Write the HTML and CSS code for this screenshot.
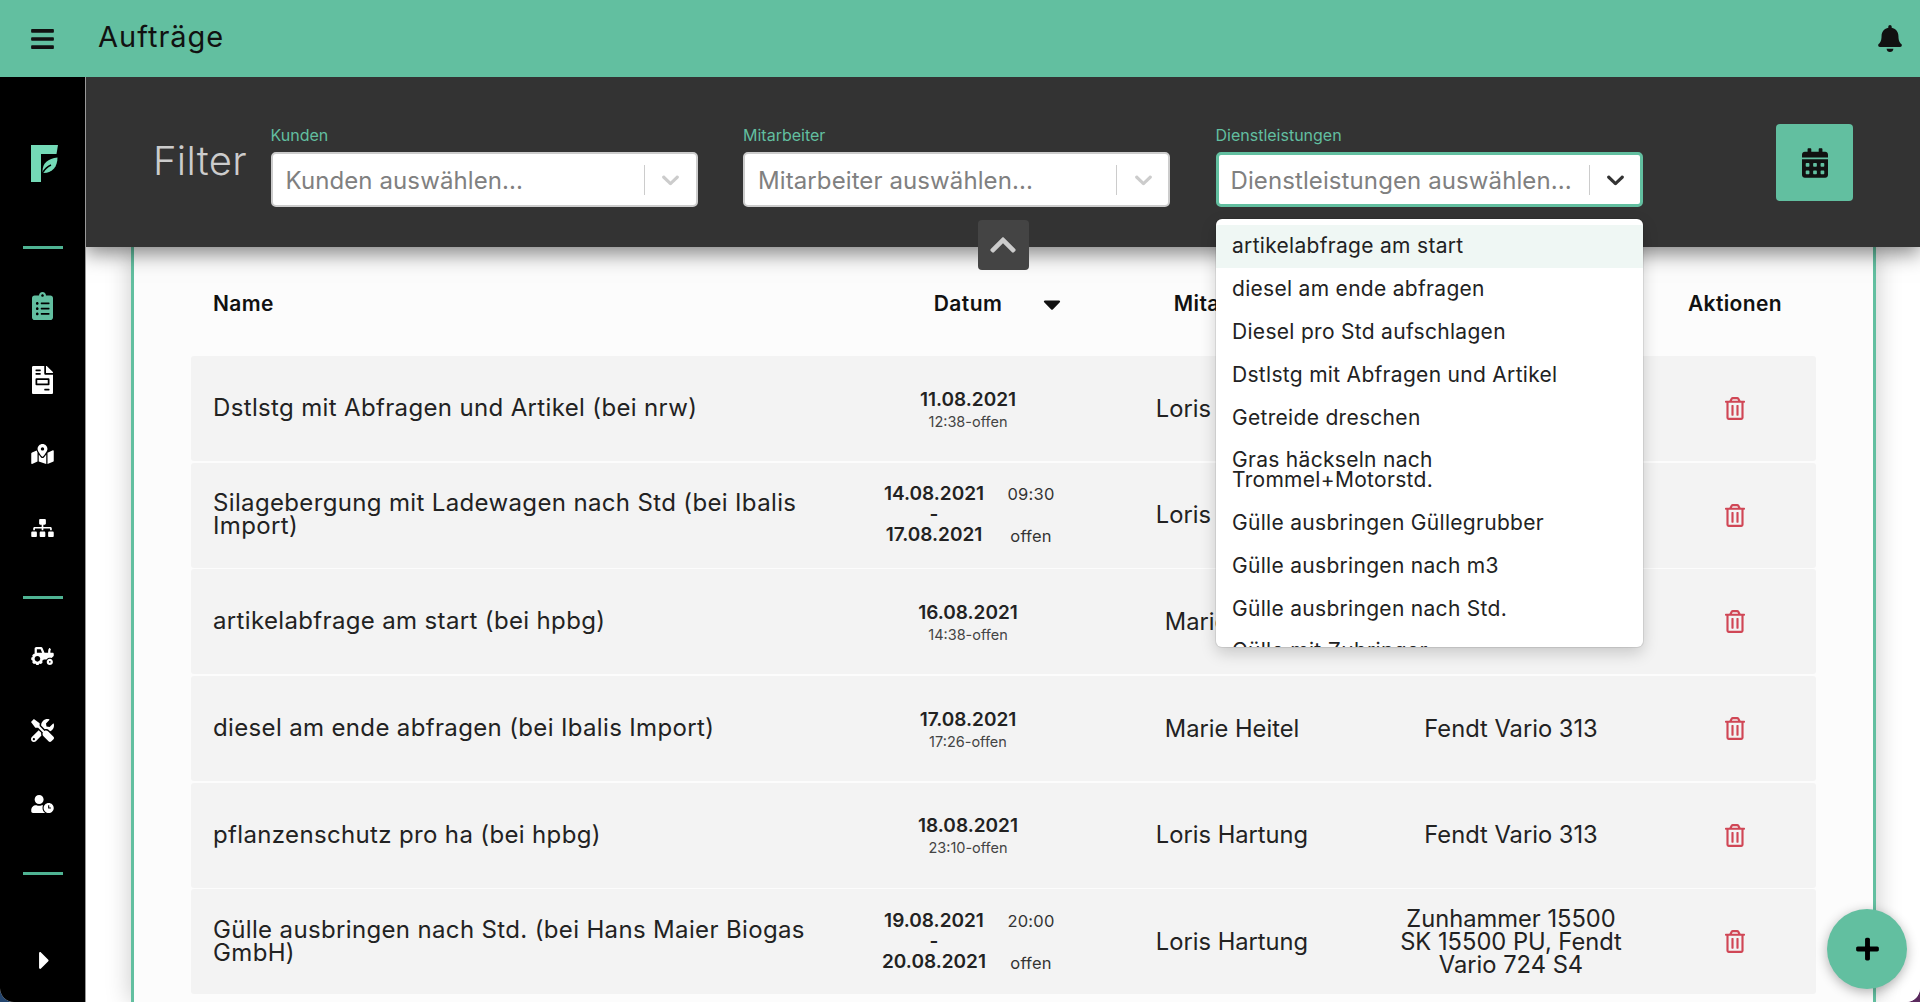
FILE: index.html
```html
<!DOCTYPE html>
<html lang="de">
<head>
<meta charset="utf-8">
<title>Aufträge</title>
<link rel="stylesheet" href="styles.css">
</head>
<body>
<svg class="defs" aria-hidden="true">
  <symbol id="i-bars" viewBox="0 0 448 512"><path d="M16 132h416c8.837 0 16-7.163 16-16V76c0-8.837-7.163-16-16-16H16C7.163 60 0 67.163 0 76v40c0 8.837 7.163 16 16 16zm0 160h416c8.837 0 16-7.163 16-16v-40c0-8.837-7.163-16-16-16H16c-8.837 0-16 7.163-16 16v40c0 8.837 7.163 16 16 16zm0 160h416c8.837 0 16-7.163 16-16v-40c0-8.837-7.163-16-16-16H16c-8.837 0-16 7.163-16 16v40c0 8.837 7.163 16 16 16z"/></symbol>
  <symbol id="i-bell" viewBox="0 0 448 512"><path d="M224 512c35.32 0 63.97-28.65 63.97-64H160.03c0 35.35 28.65 64 63.97 64zm215.39-149.71c-19.32-20.76-55.47-51.99-55.47-154.29 0-77.7-54.48-139.9-127.94-155.16V32c0-17.67-14.32-32-31.98-32s-31.98 14.33-31.98 32v20.84C118.56 68.1 64.08 130.3 64.08 208c0 102.3-36.15 133.53-55.47 154.29-6 6.45-8.66 14.16-8.61 21.71.11 16.4 12.98 32 32.1 32h383.8c19.12 0 32-15.6 32.1-32 .05-7.55-2.61-15.27-8.61-21.71z"/></symbol>
  <symbol id="i-calendar" viewBox="0 0 448 512"><path d="M0 464c0 26.5 21.5 48 48 48h352c26.5 0 48-21.5 48-48V192H0v272zm320-196c0-6.6 5.4-12 12-12h40c6.6 0 12 5.4 12 12v40c0 6.6-5.4 12-12 12h-40c-6.6 0-12-5.4-12-12v-40zm0 128c0-6.6 5.4-12 12-12h40c6.6 0 12 5.4 12 12v40c0 6.6-5.4 12-12 12h-40c-6.6 0-12-5.4-12-12v-40zM192 268c0-6.6 5.4-12 12-12h40c6.6 0 12 5.4 12 12v40c0 6.6-5.4 12-12 12h-40c-6.6 0-12-5.4-12-12v-40zm0 128c0-6.6 5.4-12 12-12h40c6.6 0 12 5.4 12 12v40c0 6.6-5.4 12-12 12h-40c-6.6 0-12-5.4-12-12v-40zM64 268c0-6.6 5.4-12 12-12h40c6.6 0 12 5.4 12 12v40c0 6.6-5.4 12-12 12H76c-6.6 0-12-5.4-12-12v-40zm0 128c0-6.6 5.4-12 12-12h40c6.6 0 12 5.4 12 12v40c0 6.6-5.4 12-12 12H76c-6.6 0-12-5.4-12-12v-40zM400 64h-48V16c0-8.8-7.2-16-16-16h-32c-8.8 0-16 7.2-16 16v48H160V16c0-8.8-7.2-16-16-16h-32c-8.8 0-16 7.2-16 16v48H48C21.5 64 0 85.5 0 112v48h448v-48c0-26.5-21.5-48-48-48z"/></symbol>
  <symbol id="i-clipboard" viewBox="0 0 384 512"><path d="M336 64h-80c0-35.3-28.7-64-64-64s-64 28.7-64 64H48C21.5 64 0 85.5 0 112v352c0 26.5 21.5 48 48 48h288c26.5 0 48-21.5 48-48V112c0-26.5-21.5-48-48-48zM96 424c-13.3 0-24-10.7-24-24s10.7-24 24-24 24 10.7 24 24-10.7 24-24 24zm0-96c-13.3 0-24-10.7-24-24s10.7-24 24-24 24 10.7 24 24-10.7 24-24 24zm0-96c-13.3 0-24-10.7-24-24s10.7-24 24-24 24 10.7 24 24-10.7 24-24 24zm96-192c13.3 0 24 10.7 24 24s-10.7 24-24 24-24-10.7-24-24 10.7-24 24-24zm128 368c0 4.4-3.6 8-8 8H168c-4.4 0-8-3.6-8-8v-16c0-4.4 3.6-8 8-8h144c4.4 0 8 3.6 8 8v16zm0-96c0 4.4-3.6 8-8 8H168c-4.4 0-8-3.6-8-8v-16c0-4.4 3.6-8 8-8h144c4.4 0 8 3.6 8 8v16zm0-96c0 4.4-3.6 8-8 8H168c-4.4 0-8-3.6-8-8v-16c0-4.4 3.6-8 8-8h144c4.4 0 8 3.6 8 8v16z"/></symbol>
  <symbol id="i-invoice" viewBox="0 0 384 512"><path d="M288 256H96v64h192v-64zm89-151L279.1 7c-4.5-4.5-10.6-7-17-7H256v128h128v-6.1c0-6.3-2.5-12.4-7-16.9zm-153 31V0H24C10.7 0 0 10.7 0 24v464c0 13.3 10.7 24 24 24h336c13.3 0 24-10.7 24-24V160H248c-13.2 0-24-10.8-24-24zM64 72c0-4.42 3.58-8 8-8h80c4.42 0 8 3.58 8 8v16c0 4.42-3.58 8-8 8H72c-4.42 0-8-3.58-8-8V72zm0 64c0-4.42 3.58-8 8-8h80c4.42 0 8 3.58 8 8v16c0 4.42-3.58 8-8 8H72c-4.42 0-8-3.58-8-8v-16zm256 304c0 4.42-3.58 8-8 8h-80c-4.42 0-8-3.58-8-8v-16c0-4.42 3.58-8 8-8h80c4.42 0 8 3.58 8 8v16zm0-200v96c0 8.84-7.16 16-16 16H80c-8.84 0-16-7.16-16-16v-96c0-8.84 7.16-16 16-16h224c8.84 0 16 7.16 16 16z"/></symbol>
  <symbol id="i-map" viewBox="0 0 576 512"><path d="M288 0c-69.59 0-126 56.41-126 126 0 56.26 82.35 158.8 113.9 196.02 6.39 7.54 17.82 7.54 24.2 0C331.65 284.8 414 182.26 414 126 414 56.41 357.59 0 288 0zm0 168c-23.2 0-42-18.8-42-42s18.8-42 42-42 42 18.8 42 42-18.8 42-42 42zM20.12 215.95A32.006 32.006 0 0 0 0 245.66v250.32c0 11.32 11.43 19.06 21.94 14.86L160 448V214.92c-8.84-15.98-16.07-31.54-21.25-46.42L20.12 215.95zM288 359.67c-14.07 0-27.38-6.18-36.51-16.96-19.66-23.2-40.57-49.62-59.49-76.72V448l192 64V266c-18.92 27.09-39.82 53.52-59.49 76.72-9.13 10.77-22.44 16.95-36.51 16.95zm266.06-198.51L416 224v288l139.88-55.95A31.996 31.996 0 0 0 576 426.34V176.02c0-11.32-11.43-19.06-21.94-14.86z"/></symbol>
  <symbol id="i-sitemap" viewBox="0 0 640 512"><path d="M128 352H32c-17.67 0-32 14.33-32 32v96c0 17.67 14.33 32 32 32h96c17.67 0 32-14.33 32-32v-96c0-17.67-14.33-32-32-32zm-24-80h192v48h48v-48h192v48h48v-57.59c0-21.17-17.23-38.41-38.41-38.41H344v-64h40c17.67 0 32-14.33 32-32V32c0-17.67-14.33-32-32-32H256c-17.67 0-32 14.33-32 32v96c0 17.67 14.33 32 32 32h40v64H94.41C73.23 224 56 241.23 56 262.41V320h48v-48zm264 80h-96c-17.67 0-32 14.33-32 32v96c0 17.67 14.33 32 32 32h96c17.67 0 32-14.33 32-32v-96c0-17.67-14.33-32-32-32zm240 0h-96c-17.67 0-32 14.33-32 32v96c0 17.67 14.33 32 32 32h96c17.67 0 32-14.33 32-32v-96c0-17.67-14.33-32-32-32z"/></symbol>
  <symbol id="i-tractor" viewBox="0 0 640 512"><path d="M528 336c-48.6 0-88 39.4-88 88s39.4 88 88 88 88-39.4 88-88-39.4-88-88-88zm0 112c-13.23 0-24-10.77-24-24s10.77-24 24-24 24 10.77 24 24-10.77 24-24 24zm80-288h-64v-40.2c0-14.12 4.7-27.76 13.15-38.84 4.42-5.8 3.55-14.06-1.32-19.49L534.2 37.3c-6.66-7.45-18.32-6.92-24.7.78C490.58 60.9 480 89.81 480 119.8V160H377.67L321.58 29.14A47.914 47.914 0 0 0 277.45 0H144c-26.47 0-48 21.53-48 48v146.52c-8.63-6.73-20.96-6.46-28.89 1.47L36 227.1c-8.59 8.59-8.59 22.52 0 31.11l5.06 5.06c-4.99 9.26-8.96 18.82-11.91 28.72H22c-12.15 0-22 9.85-22 22v44c0 12.15 9.85 22 22 22h7.14c2.96 9.91 6.92 19.46 11.91 28.73l-5.06 5.06c-8.59 8.59-8.59 22.52 0 31.11L67.1 476c8.59 8.59 22.52 8.59 31.11 0l5.06-5.06c9.26 4.99 18.82 8.96 28.72 11.91V490c0 12.15 9.85 22 22 22h44c12.15 0 22-9.85 22-22v-7.14c9.9-2.95 19.46-6.92 28.72-11.91l5.06 5.06c8.59 8.59 22.52 8.59 31.11 0l31.11-31.11c8.59-8.59 8.59-22.52 0-31.11l-5.06-5.06c4.99-9.26 8.96-18.82 11.91-28.72H330c12.15 0 22-9.85 22-22v-6h80.54c21.91-28.99 56.32-48 95.46-48 18.64 0 36.07 4.61 51.8 12.2l50.82-50.82c6-6 9.37-14.14 9.37-22.63V192c.01-17.67-14.32-32-31.99-32zM176 416c-44.18 0-80-35.82-80-80s35.82-80 80-80 80 35.82 80 80-35.82 80-80 80zm22-256h-38V64h106.89l41.15 96H198z"/></symbol>
  <symbol id="i-tools" viewBox="0 0 512 512"><path d="M501.1 395.7L384 278.6c-23.1-23.1-57.6-27.6-85.4-13.9L192 158.1V96L64 0 0 64l96 128h62.1l106.6 106.6c-13.6 27.8-9.2 62.3 13.9 85.4l117.1 117.1c14.6 14.6 38.2 14.6 52.7 0l52.7-52.7c14.5-14.6 14.5-38.2 0-52.7zM331.7 225c28.3 0 54.9 11 74.9 31l19.4 19.4c15.8-6.9 30.8-16.5 43.8-29.5 37.1-37.1 49.7-89.3 37.9-136.7-2.2-9-13.5-12.1-20.1-5.5l-74.4 74.4-67.9-11.3L334 98.9l74.4-74.4c6.6-6.6 3.4-17.9-5.7-20.2-47.4-11.7-99.6.9-136.6 37.9-28.5 28.5-41.9 66.1-41.2 103.6l82.1 82.1c8.1-1.9 16.5-2.9 24.7-2.9zm-103.9 82l-56.7-56.7L18.7 402.8c-25 25-25 65.5 0 90.5s65.5 25 90.5 0l123.6-123.6c-7.6-19.9-9.9-41.6-5-62.7zM64 472c-13.2 0-24-10.8-24-24 0-13.3 10.7-24 24-24s24 10.7 24 24c0 13.2-10.7 24-24 24z"/></symbol>
  <symbol id="i-userclock" viewBox="0 0 640 512"><path d="M496 224c-79.6 0-144 64.4-144 144s64.4 144 144 144 144-64.4 144-144-64.4-144-144-144zm64 150.3c0 5.3-4.4 9.7-9.7 9.7h-60.6c-5.3 0-9.7-4.4-9.7-9.7v-76.6c0-5.3 4.4-9.7 9.7-9.7h12.6c5.3 0 9.7 4.4 9.7 9.7V352h38.3c5.3 0 9.7 4.4 9.7 9.7v12.6zM320 368c0-27.8 6.7-54.1 18.2-77.5-8-1.5-16.2-2.5-24.6-2.5h-16.7c-22.2 10.2-46.9 16-72.9 16s-50.6-5.8-72.9-16h-16.7C60.2 288 0 348.2 0 422.4V464c0 26.5 21.5 48 48 48h347.1c-45.3-31.9-75.1-84.5-75.1-144zm-96-112c70.7 0 128-57.3 128-128S294.7 0 224 0 96 57.3 96 128s57.3 128 128 128z"/></symbol>
  <symbol id="i-caretright" viewBox="0 0 192 512"><path d="M0 384.662V127.338c0-17.818 21.543-26.741 34.142-14.142l128.662 128.662c7.81 7.81 7.81 20.474 0 28.284L34.142 398.804C21.543 411.404 0 402.48 0 384.662z"/></symbol>
  <symbol id="i-caretdown" viewBox="0 0 320 512"><path d="M31.3 192h257.3c17.8 0 26.7 21.5 14.1 34.1L174.1 354.8c-7.8 7.8-20.5 7.8-28.3 0L17.2 226.1C4.6 213.5 13.5 192 31.3 192z"/></symbol>
  <symbol id="i-chevup" viewBox="0 0 448 512"><path d="M240.971 130.524l194.343 194.343c9.373 9.373 9.373 24.569 0 33.941l-22.667 22.667c-9.357 9.357-24.522 9.375-33.901.04L224 227.495 69.255 381.516c-9.379 9.335-24.544 9.317-33.901-.04l-22.667-22.667c-9.373-9.373-9.373-24.569 0-33.941L207.03 130.525c9.372-9.373 24.568-9.373 33.941-.001z"/></symbol>
  <symbol id="i-plus" viewBox="0 0 448 512"><path d="M416 208H272V64c0-17.67-14.33-32-32-32h-32c-17.67 0-32 14.33-32 32v144H32c-17.67 0-32 14.33-32 32v32c0 17.67 14.33 32 32 32h144v144c0 17.67 14.33 32 32 32h32c17.67 0 32-14.33 32-32V304h144c17.67 0 32-14.33 32-32v-32c0-17.67-14.33-32-32-32z"/></symbol>
  <symbol id="i-trash" viewBox="0 0 448 512"><path d="M268 416h24a12 12 0 0 0 12-12V188a12 12 0 0 0-12-12h-24a12 12 0 0 0-12 12v216a12 12 0 0 0 12 12zM432 80h-82.41l-34-56.7A48 48 0 0 0 274.41 0H173.59a48 48 0 0 0-41.16 23.3L98.41 80H16A16 16 0 0 0 0 96v16a16 16 0 0 0 16 16h16v336a48 48 0 0 0 48 48h288a48 48 0 0 0 48-48V128h16a16 16 0 0 0 16-16V96a16 16 0 0 0-16-16zM171.84 50.91A6 6 0 0 1 177 48h94a6 6 0 0 1 5.15 2.91L293.61 80H154.39zM368 464H80V128h288zm-212-48h24a12 12 0 0 0 12-12V188a12 12 0 0 0-12-12h-24a12 12 0 0 0-12 12v216a12 12 0 0 0 12 12z"/></symbol>
  <symbol id="i-selchev" viewBox="0 0 20 20"><path d="M4.516 7.548c0.436-0.446 1.043-0.481 1.576 0l3.908 3.747 3.908-3.747c0.533-0.481 1.141-0.446 1.576 0 0.436 0.445 0.408 1.197 0 1.615-0.406 0.418-4.695 4.502-4.695 4.502-0.217 0.223-0.502 0.335-0.789 0.335s-0.572-0.112-0.791-0.335c0 0-4.287-4.084-4.695-4.502s-0.436-1.17 0-1.615z"/></symbol>
</svg>

<div class="app">
  <header class="topbar">
    <svg class="ic-bars"><use href="#i-bars"/></svg>
    <h1 class="page-title">Aufträge</h1>
    <svg class="ic-bell"><use href="#i-bell"/></svg>
  </header>

  <div class="main">
    <aside class="sidebar">
      <div class="logo">
        <svg class="logo-mark" viewBox="0 0 27 37">
          <path class="logo-f" d="M0 0H27L25.500 9H10V37H0Z"/>
          <path class="logo-f" d="M11.500 26.500C11.500 18 17 13.500 26.500 12.500C26.500 21 22 28 12.500 28Z"/>
          <path class="logo-vein" d="M12 27.500C14 23.500 16.500 21.500 20 20"/>
        </svg>
      </div>
      <div class="rule"></div>
      <nav class="nav-group">
        <div class="nav-item"><svg class="ic-cb active"><use href="#i-clipboard"/></svg></div>
        <div class="nav-item"><svg class="ic-cb"><use href="#i-invoice"/></svg></div>
        <div class="nav-item"><svg class="ic-map"><use href="#i-map"/></svg></div>
        <div class="nav-item"><svg class="ic-wide"><use href="#i-sitemap"/></svg></div>
      </nav>
      <div class="rule rule-next"></div>
      <nav class="nav-group">
        <div class="nav-item"><svg class="ic-wide"><use href="#i-tractor"/></svg></div>
        <div class="nav-item"><svg class="ic-tools"><use href="#i-tools"/></svg></div>
        <div class="nav-item"><svg class="ic-wide"><use href="#i-userclock"/></svg></div>
      </nav>
      <div class="rule rule-next"></div>
      <div class="expand"><svg class="ic-expand"><use href="#i-caretright"/></svg></div>
    </aside>

    <div class="work">
      <section class="filterbar">
        <h2 class="filter-title">Filter</h2>
        <div class="field">
          <label class="field-label">Kunden</label>
          <div class="select">
            <span class="placeholder">Kunden auswählen...</span>
            <span class="sep"></span>
            <svg class="sel-chev"><use href="#i-selchev"/></svg>
          </div>
        </div>
        <div class="field">
          <label class="field-label">Mitarbeiter</label>
          <div class="select">
            <span class="placeholder">Mitarbeiter auswählen...</span>
            <span class="sep"></span>
            <svg class="sel-chev"><use href="#i-selchev"/></svg>
          </div>
        </div>
        <div class="field">
          <label class="field-label">Dienstleistungen</label>
          <div class="select is-open">
            <span class="placeholder">Dienstleistungen auswählen...</span>
            <span class="sep"></span>
            <svg class="sel-chev"><use href="#i-selchev"/></svg>
          </div>
          <ul class="menu">
            <li class="option is-focus">artikelabfrage am start</li>
            <li class="option">diesel am ende abfragen</li>
            <li class="option">Diesel pro Std aufschlagen</li>
            <li class="option">Dstlstg mit Abfragen und Artikel</li>
            <li class="option">Getreide dreschen</li>
            <li class="option">Gras häckseln nach<br>Trommel+Motorstd.</li>
            <li class="option">Gülle ausbringen Güllegrubber</li>
            <li class="option">Gülle ausbringen nach m3</li>
            <li class="option">Gülle ausbringen nach Std.</li>
            <li class="option">Gülle mit Zubringer</li>
          </ul>
        </div>
        <button class="cal-btn" type="button"><svg class="ic-cal"><use href="#i-calendar"/></svg></button>
        <div class="collapse-tab"><svg class="ic-chev"><use href="#i-chevup"/></svg></div>
      </section>

      <section class="content">
        <div class="panel">
          <div class="thead">
            <div class="th th-name">Name</div>
            <div class="th th-date"><span></span><span>Datum</span><svg class="ic-sort"><use href="#i-caretdown"/></svg></div>
            <div class="th">Mitarbeiter</div>
            <div class="th">Maschine</div>
            <div class="th">Aktionen</div>
          </div>
          <div class="rows">
            <div class="row">
              <div class="c-name">Dstlstg mit Abfragen und Artikel (bei nrw)</div>
              <div class="c-date"><div class="d-main">11.08.2021</div><div class="d-sub">12:38-offen</div></div>
              <div class="c-text">Loris Hartung</div>
              <div class="c-text">Fendt Vario 313</div>
              <div class="c-act"><svg class="ic-trash"><use href="#i-trash"/></svg></div>
            </div>
            <div class="row">
              <div class="c-name">Silagebergung mit Ladewagen nach Std (bei Ibalis<br>Import)</div>
              <div class="c-date range"><div class="d-days"><div class="d-main">14.08.2021</div><div class="d-main">-</div><div class="d-main">17.08.2021</div></div><div class="d-times"><span>09:30</span><span>offen</span></div></div>
              <div class="c-text">Loris Hartung</div>
              <div class="c-text">Fendt Vario 313</div>
              <div class="c-act"><svg class="ic-trash"><use href="#i-trash"/></svg></div>
            </div>
            <div class="row">
              <div class="c-name">artikelabfrage am start (bei hpbg)</div>
              <div class="c-date"><div class="d-main">16.08.2021</div><div class="d-sub">14:38-offen</div></div>
              <div class="c-text">Marie Heitel</div>
              <div class="c-text">Fendt Vario 313</div>
              <div class="c-act"><svg class="ic-trash"><use href="#i-trash"/></svg></div>
            </div>
            <div class="row">
              <div class="c-name">diesel am ende abfragen (bei Ibalis Import)</div>
              <div class="c-date"><div class="d-main">17.08.2021</div><div class="d-sub">17:26-offen</div></div>
              <div class="c-text">Marie Heitel</div>
              <div class="c-text">Fendt Vario 313</div>
              <div class="c-act"><svg class="ic-trash"><use href="#i-trash"/></svg></div>
            </div>
            <div class="row">
              <div class="c-name">pflanzenschutz pro ha (bei hpbg)</div>
              <div class="c-date"><div class="d-main">18.08.2021</div><div class="d-sub">23:10-offen</div></div>
              <div class="c-text">Loris Hartung</div>
              <div class="c-text">Fendt Vario 313</div>
              <div class="c-act"><svg class="ic-trash"><use href="#i-trash"/></svg></div>
            </div>
            <div class="row">
              <div class="c-name">Gülle ausbringen nach Std. (bei Hans Maier Biogas<br>GmbH)</div>
              <div class="c-date range"><div class="d-days"><div class="d-main">19.08.2021</div><div class="d-main">-</div><div class="d-main">20.08.2021</div></div><div class="d-times"><span>20:00</span><span>offen</span></div></div>
              <div class="c-text">Loris Hartung</div>
              <div class="c-text">Zunhammer 15500<br>SK 15500 PU, Fendt<br>Vario 724 S4</div>
              <div class="c-act"><svg class="ic-trash"><use href="#i-trash"/></svg></div>
            </div>
          </div>
        </div>
      </section>
    </div>
  </div>
  <button class="fab" type="button"><svg class="ic-plus"><use href="#i-plus"/></svg></button>
</div>
</body>
</html>
```

FILE: styles.css
```css
* { box-sizing: border-box; }
html, body { margin: 0; height: 100%; overflow: hidden; }
body {
  background: linear-gradient(90deg, #24456e 0 50%, #5a2a5e 50% 100%);
  font-family: "Inter", "Noto Sans", "Liberation Sans", sans-serif;
  color: #222;
}
.defs { width: 0; height: 0; display: block; position: absolute; }
svg { display: block; fill: currentColor; }

.app {
  position: relative;
  height: 1002px;
  display: flex;
  flex-direction: column;
  overflow: hidden;
  background: #fff;
  border-radius: 0 0 14px 14px;
}

/* top bar */
.topbar {
  height: 77px;
  flex: none;
  background: #62bfa0;
  display: flex;
  align-items: center;
  padding: 0 18px 0 31px;
  color: #111;
  position: relative;
  z-index: 4;
}
.ic-bars { width: 23px; height: 26px; }
.page-title {
  margin: 0 0 4px 44px;
  font-size: 29px;
  font-weight: 400;
  line-height: 1;
  letter-spacing: 1px;
}
.ic-bell { width: 24px; height: 27px; margin-left: auto; }

.main { flex: 1; display: flex; min-height: 0; }

/* sidebar */
.sidebar {
  width: 85px;
  flex: none;
  background: #000;
  color: #fff;
  display: flex;
  flex-direction: column;
  align-items: center;
  box-shadow: 1px 0 0 #999;
  position: relative;
  z-index: 3;
}
.sidebar > * { flex: none; }
.logo { height: 169px; padding: 4px 0 0 4px; display: flex; align-items: center; justify-content: center; }
.logo-mark { width: 27px; height: 37px; }
.logo-f { fill: #74dab7; }
.logo-vein { fill: none; stroke: #000; stroke-width: 1.500; }
.rule { width: 40px; height: 3px; background: #4fb393; }
.rule-next { margin-top: 31px; }
.nav-group { margin-top: 20px; display: flex; flex-direction: column; }
.nav-item { height: 74px; display: flex; align-items: center; justify-content: center; }
.ic-cb { width: 21px; height: 28px; }
.ic-cb.active { color: #62bfa0; }
.ic-map { width: 23px; height: 20px; }
.ic-wide { width: 23px; height: 18px; }
.ic-tools { width: 23px; height: 23px; }
.expand { margin-top: 20px; height: 107px; padding: 24px 0 0 4px; display: flex; align-items: center; }
.ic-expand { width: 11px; height: 29px; }

.work { flex: 1; display: flex; flex-direction: column; min-width: 0; }

/* filter bar */
.filterbar {
  height: 170px;
  flex: none;
  background: #333;
  display: flex;
  align-items: flex-start;
  padding: 46px 67px 0 68px;
  position: relative;
  z-index: 2;
  box-shadow: 0 6px 20px rgba(0, 0, 0, 0.5);
}
.filter-title {
  margin: 15px 23.500px 0 0;
  width: 94px;
  font-size: 40px;
  font-weight: 300;
  letter-spacing: 0.3px;
  line-height: 46px;
  color: #ccc;
  white-space: nowrap;
}
.field { position: relative; width: 427px; margin-right: 45.500px; }
.field-label {
  display: block;
  height: 29px;
  padding-top: 3px;
  font-size: 16px;
  line-height: 18px;
  color: #62bfa0;
}
.select {
  height: 55px;
  background: #fff;
  border: 2px solid #ccc;
  border-radius: 5px;
  display: flex;
  align-items: center;
  padding-left: 13px;
}
.select.is-open { border: 3px solid #62bfa0; padding-left: 12px; }
.placeholder {
  flex: 1;
  min-width: 0;
  padding-top: 1px;
  font-size: 24px;
  letter-spacing: 0.1px;
  color: #808080;
  white-space: nowrap;
  overflow: hidden;
  text-overflow: ellipsis;
}
.sep { width: 1px; height: 30px; background: #ccc; flex: none; margin-right: 11.500px; }
.sel-chev { width: 29px; height: 29px; color: #ccc; margin-right: 10.500px; flex: none; }
.is-open .sel-chev { color: #333; margin-right: 9.500px; }

.menu {
  position: absolute;
  top: 96px;
  left: 0;
  width: 100%;
  height: 428px;
  margin: 0;
  padding: 6px 0 0;
  list-style: none;
  background: #fff;
  border-radius: 6px;
  overflow: hidden;
  box-shadow: 0 0 0 1px rgba(0, 0, 0, 0.08), 0 6px 16px rgba(0, 0, 0, 0.18);
  z-index: 5;
}
.option {
  padding: 11.400px 16.500px;
  font-size: 21px;
  letter-spacing: 0.3px;
  line-height: 20px;
  color: #222;
}
.option.is-focus { background: #eff7f4; }

.cal-btn {
  width: 77px;
  height: 77px;
  margin: 1px 0 0 auto;
  border: 0;
  padding: 0;
  border-radius: 4px;
  background: #62bfa0;
  color: #111;
  display: flex;
  align-items: center;
  justify-content: center;
}
.ic-cal { width: 26px; height: 30px; }

.collapse-tab {
  position: absolute;
  left: 50%;
  bottom: -23px;
  width: 51px;
  height: 50px;
  margin-left: -25px;
  background: #444;
  border-radius: 4px;
  display: flex;
  align-items: center;
  justify-content: center;
  color: #ccc;
}
.ic-chev { width: 26px; height: 30px; }

/* content */
.content { flex: 1; min-height: 0; overflow: hidden; padding: 0 44px 0 46px; background: #fff; }
.panel {
  height: 100%;
  background: #fcfcfc;
  border-left: 3px solid #62bfa0;
  border-right: 3px solid #62bfa0;
  box-shadow: 0 0 24px rgba(0, 0, 0, 0.22);
  padding: 0 57px;
}
.thead,
.row {
  display: grid;
  grid-template-columns: 649px 256px 272px 286px 162px;
}
.thead { height: 109px; padding-top: 39px; align-items: start; }
.th {
  font-size: 21px;
  font-weight: 600;
  letter-spacing: 0.4px;
  line-height: 36px;
  color: #111;
  text-align: center;
}
.th-name { text-align: left; padding-left: 22px; }
.th-date { display: grid; grid-template-columns: 1fr auto 1fr; align-items: center; }
.ic-sort { width: 18px; height: 28px; margin-left: 41px; }

.rows { display: flex; flex-direction: column; gap: 1.700px; }
.row {
  height: 105px;
  background: #f3f3f3;
  border-radius: 3px;
  align-items: center;
  font-size: 23.700px;
  color: #222;
}
.c-name { padding: 0 0 2px 22px; font-size: 24px; line-height: 23px; letter-spacing: 0.35px; }
.c-date { text-align: center; color: #222; }
.d-main { font-size: 19px; font-weight: 600; line-height: 26px; }
.d-sub { font-size: 14.500px; line-height: 18px; color: #444; }
.c-date.range { display: grid; grid-template-columns: 124px 66px; justify-content: center; column-gap: 2px; }
.d-days .d-main { line-height: 20.500px; }
.d-times {
  display: flex;
  flex-direction: column;
  justify-content: space-between;
  font-size: 16.500px;
  letter-spacing: 0.2px;
  line-height: 20px;
  color: #333;
}
.c-text { padding-bottom: 1px; text-align: center; line-height: 23px; }
.c-act { display: flex; justify-content: center; color: #d04655; }
.ic-trash { width: 20px; height: 23px; }

.fab {
  position: absolute;
  left: 1827px;
  top: 909px;
  width: 80px;
  height: 80px;
  border: 0;
  padding: 0;
  border-radius: 50%;
  background: #62bfa0;
  color: #000;
  display: flex;
  align-items: center;
  justify-content: center;
  box-shadow: 0 3px 12px rgba(0, 0, 0, 0.3);
  z-index: 6;
}
.ic-plus { width: 23px; height: 26px; }
```
